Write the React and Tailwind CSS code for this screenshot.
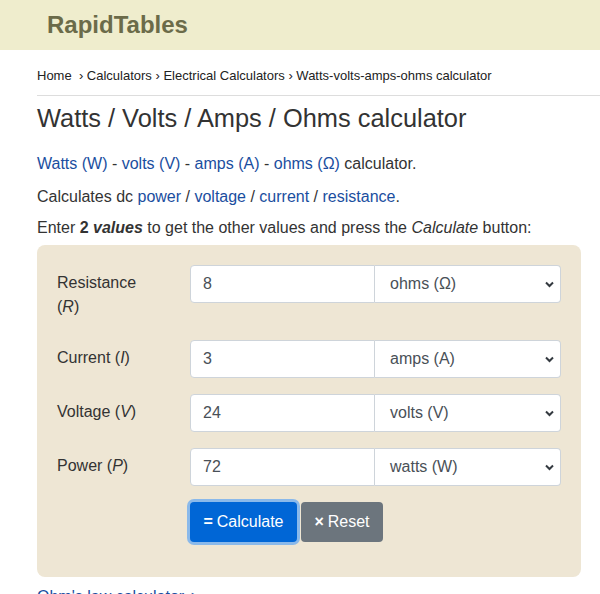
import React from "react";

const F = { fontFamily: '"Liberation Sans", Arial, sans-serif' };

function Row({ label, value, unit, tall }) {
  return (
    <div className="flex items-start mb-4">
      <div className={"w-[133px] pr-[30px] pt-[6px] text-[16px] leading-6 text-[#333] " + (tall ? "pb-[5px]" : "")}>
        {label}
      </div>
      <div className="flex w-[371px] h-[38px]">
        <input
          readOnly
          value={value}
          className="w-[185px] h-[38px] border border-[#ced4da] rounded-l-[4px] bg-white pl-3 text-[16px] text-[#495057] outline-none"
          style={F}
        />
        <div className="relative w-[186px] h-[38px] border border-l-0 border-[#ced4da] rounded-r-[4px] bg-white flex items-center pl-[15px] text-[16px] text-[#495057]">
          {unit}
          <svg className="absolute right-[6px] top-[15px]" width="9" height="7" viewBox="0 0 9 7">
            <path d="M1 1.5 L4.5 5 L8 1.5" fill="none" stroke="#343a40" strokeWidth="2" />
          </svg>
        </div>
      </div>
    </div>
  );
}

export default function App() {
  const link = "text-[#1a4ea0]";
  return (
    <div className="w-[600px] h-[594px] overflow-hidden bg-white text-[#333]" style={F}>
      <div className="h-[50px] bg-[#efedcd] flex items-center pl-[47px]">
        <span className="text-[24px] font-bold text-[#6b6b49]">RapidTables</span>
      </div>
      <div className="pl-[37px]">
        <div className="mt-4 pb-[9px] border-b border-[#dddddd] text-[13px] leading-5 text-[#222]">
          Home&nbsp; › Calculators › Electrical Calculators › Watts-volts-amps-ohms calculator
        </div>
        <h1 className="mt-[7px] text-[25.4px] leading-[30px] text-[#333]">Watts / Volts / Amps / Ohms calculator</h1>
        <p className="mt-[19px] text-[16px] leading-6">
          <span className={link}>Watts (W)</span> - <span className={link}>volts (V)</span> - <span className={link}>amps (A)</span> - <span className={link}>ohms (Ω)</span> calculator.
        </p>
        <p className="mt-[9px] text-[16px] leading-6">
          Calculates dc <span className={link}>power</span> / <span className={link}>voltage</span> / <span className={link}>current</span> / <span className={link}>resistance</span>.
        </p>
        <p className="mt-[7px] text-[16px] leading-6">
          Enter <b>2 <i>values</i></b> to get the other values and press the <i>Calculate</i> button:
        </p>
        <div className="mt-[5px] w-[544px] bg-[#eee6d4] rounded-[8px] pt-5 pl-5 pr-5 pb-[35px]">
          <Row label={<>Resistance<br />(<i>R</i>)</>} value="8" unit="ohms (Ω)" tall />
          <Row label={<>Current (<i>I</i>)</>} value="3" unit="amps (A)" />
          <Row label={<>Voltage (<i>V</i>)</>} value="24" unit="volts (V)" />
          <Row label={<>Power (<i>P</i>)</>} value="72" unit="watts (W)" />
          <div className="flex pl-[133px] gap-[4px]">
            <div className="w-[107px] h-[40px] rounded-[4px] bg-[#0066d6] text-white text-[16px] flex items-center justify-center shadow-[0_0_0_3px_#8ab9ea]">
              <b className="mr-[4px]">=</b>Calculate
            </div>
            <div className="w-[82px] h-[40px] rounded-[4px] bg-[#6c757d] text-white text-[16px] flex items-center justify-center">
              <b className="mr-[4px]">×</b>Reset
            </div>
          </div>
        </div>
        <div className="mt-[8px] text-[16px] leading-6 text-[#1a4ea0]">Ohm's law calculator ►</div>
      </div>
    </div>
  );
}
